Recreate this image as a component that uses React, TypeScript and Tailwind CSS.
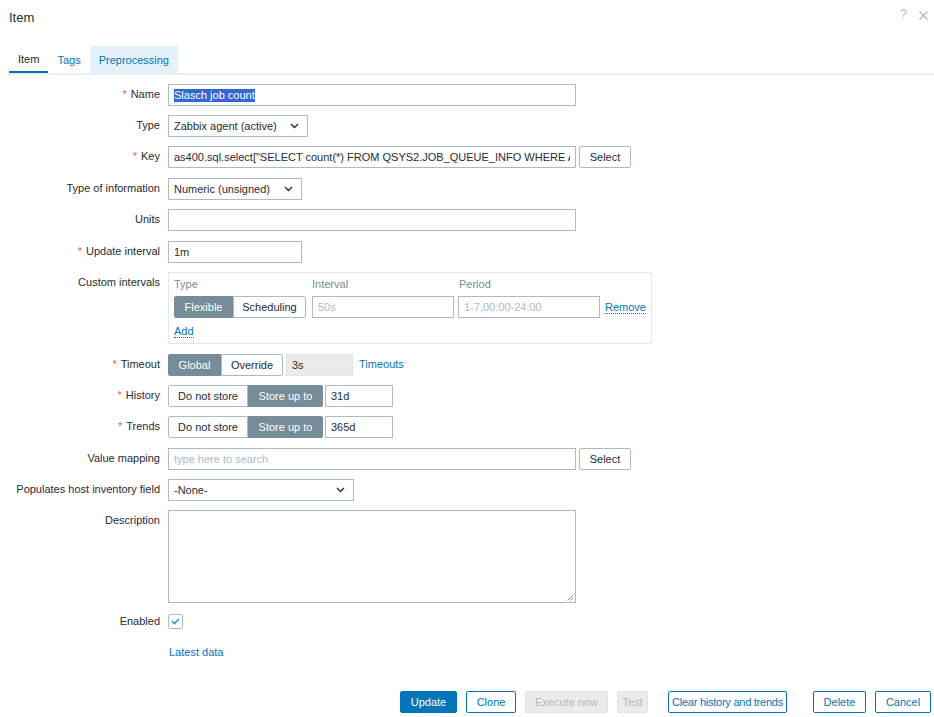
import React from 'react';

const inputCls = 'h-[22px] border border-[#acbbc2] bg-white px-[5px] flex items-center whitespace-nowrap overflow-hidden';

function Label({ text, req, className = '' }: { text: string; req?: boolean; className?: string }) {
  return (
    <div className={`w-[160px] shrink-0 text-right ${className || 'leading-[20px]'}`}>
      {req && <span className="text-[#e45959] mr-[4px]">*</span>}
      {text}
    </div>
  );
}

function Row({ label, req, children, className = '', labelCls = '' }: { label?: string; req?: boolean; children: React.ReactNode; className?: string; labelCls?: string }) {
  return (
    <div className={`flex gap-[8px] ${className}`}>
      <Label text={label ?? ''} req={req} className={labelCls} />
      <div className="flex items-start">{children}</div>
    </div>
  );
}

function Chevron() {
  return (
    <svg width="9" height="6" viewBox="0 0 9 6" className="shrink-0">
      <path d="M1 1 L4.5 4.5 L8 1" fill="none" stroke="#1f2c33" strokeWidth="1.4" />
    </svg>
  );
}

function Select({ value, w }: { value: string; w: string }) {
  return (
    <div className={`${inputCls} ${w} justify-between pr-[8px]`}>
      <span>{value}</span>
      <Chevron />
    </div>
  );
}

function Segmented({ options, active, widths }: { options: string[]; active: number; widths: string[] }) {
  return (
    <div className="flex">
      {options.map((o, i) => (
        <div
          key={o}
          className={`h-[22px] flex items-center justify-center border ${widths[i]} ${
            i === 0 ? 'rounded-l-[2px]' : ''
          } ${i === options.length - 1 ? 'rounded-r-[2px]' : ''} ${
            i === active ? 'bg-[#768d99] border-[#768d99] text-white' : 'bg-white border-[#acbbc2] text-[#1f2c33]'
          }`}
        >
          {o}
        </div>
      ))}
    </div>
  );
}

function GreyButton({ text }: { text: string }) {
  return (
    <div className="ml-[3px] h-[22px] w-[52px] flex items-center justify-center border border-[#acbbc2] rounded-[2px] bg-white">
      {text}
    </div>
  );
}

export default function App() {
  return (
    <div className="relative w-[934px] h-[717px] bg-white text-[11px] text-[#1f2c33] font-['Liberation_Sans',Arial,sans-serif] overflow-hidden">
      {/* header */}
      <div className="flex items-start justify-between pl-[9px] pr-[6px] pt-[10px]">
        <div className="text-[13px] leading-[16px] text-[#1f2c33]">Item</div>
        <div className="flex items-center gap-[12px] text-[#acbbc2]">
          <span className="text-[12px] leading-[12px] -mt-[2px]">?</span>
          <svg width="9" height="9" viewBox="0 0 9 9">
            <path d="M0.5 0.5 L8.5 8.5 M8.5 0.5 L0.5 8.5" stroke="#acbbc2" strokeWidth="1.4" />
          </svg>
        </div>
      </div>

      {/* tabs */}
      <div className="ml-[9px] mt-[20px] flex border-b-2 border-[#ebeef0]">
        <div className="h-[27px] px-[9px] flex items-center border-b-2 border-[#0275b8] pt-px">Item</div>
        <div className="h-[27px] px-[9px] flex items-center text-[#0275b8] pt-px">Tags</div>
        <div className="h-[27px] px-[9px] flex items-center text-[#0275b8] bg-[#e6f2fb] pt-px">Preprocessing</div>
      </div>

      {/* form */}
      <div className="mt-[9px] flex flex-col gap-[9px]">
        <Row label="Name" req>
          <div className={`${inputCls} w-[408px] border-[#0275b8]`}>
            <span className="bg-[#3367d6] text-white leading-[13px]">Slasch job count</span>
          </div>
        </Row>
        <Row label="Type">
          <Select value="Zabbix agent (active)" w="w-[140px]" />
        </Row>
        <Row label="Key" req>
          <input
            readOnly
            value={'as400.sql.select["SELECT count(*) FROM QSYS2.JOB_QUEUE_INFO WHERE ACTIVE_JOBS > 0"]'}
            className="h-[22px] w-[408px] border border-[#acbbc2] bg-white px-[5px] text-[11px] text-[#1f2c33] outline-none"
          />
          <GreyButton text="Select" />
        </Row>
        <Row label="Type of information" className="mt-px">
          <Select value="Numeric (unsigned)" w="w-[134px]" />
        </Row>
        <Row label="Units">
          <div className={`${inputCls} w-[408px]`} />
        </Row>
        <Row label="Update interval" req className="mt-px">
          <div className={`${inputCls} w-[134px]`}>1m</div>
        </Row>
        <Row label="Custom intervals">
          <div className="w-[484px] h-[72px] border border-[#e4e8eb] px-[5px] pt-[4px]">
            <div className="flex text-[#768d99] leading-[14px]">
              <div className="w-[138px]">Type</div>
              <div className="w-[147px]">Interval</div>
              <div>Period</div>
            </div>
            <div className="mt-[5px] flex items-center">
              <Segmented options={['Flexible', 'Scheduling']} active={0} widths={['w-[59px]', 'w-[73px]']} />
              <div className={`${inputCls} w-[143px] ml-[6px] text-[#acbbc2]`}>50s</div>
              <div className={`${inputCls} w-[143px] ml-[4px] text-[#acbbc2]`}>1-7,00:00-24:00</div>
              <span className="ml-[5px] text-[#0275b8] border-b border-dotted border-[#0275b8] leading-[12px]">Remove</span>
            </div>
            <div className="mt-[5px]">
              <span className="text-[#0275b8] border-b border-dotted border-[#0275b8] leading-[12px]">Add</span>
            </div>
          </div>
        </Row>
        <Row label="Timeout" req className="mt-px">
          <Segmented options={['Global', 'Override']} active={0} widths={['w-[53px]', 'w-[62px]']} />
          <div className="ml-[3px] h-[22px] w-[67px] border border-[#dfe4e7] bg-[#ebebeb] px-[5px] flex items-center">3s</div>
          <span className="ml-[6px] text-[#0275b8] leading-[20px]">Timeouts</span>
        </Row>
        <Row label="History" req>
          <Segmented options={['Do not store', 'Store up to']} active={1} widths={['w-[80px]', 'w-[75px]']} />
          <div className={`${inputCls} w-[68px] ml-[2px]`}>31d</div>
        </Row>
        <Row label="Trends" req>
          <Segmented options={['Do not store', 'Store up to']} active={1} widths={['w-[80px]', 'w-[75px]']} />
          <div className={`${inputCls} w-[68px] ml-[2px]`}>365d</div>
        </Row>
        <Row label="Value mapping" className="mt-px">
          <div className={`${inputCls} w-[408px] text-[#acbbc2]`}>type here to search</div>
          <GreyButton text="Select" />
        </Row>
        <Row label="Populates host inventory field">
          <Select value="-None-" w="w-[186px]" />
        </Row>
        <Row label="Description">
          <div className="relative w-[408px] h-[93px] border border-[#acbbc2] bg-white">
            <svg width="7" height="7" viewBox="0 0 7 7" className="absolute right-[1px] bottom-[1px]">
              <path d="M6.5 0.5 L0.5 6.5 M6.5 3.5 L3.5 6.5" stroke="#8a8a8a" strokeWidth="0.9" />
            </svg>
          </div>
        </Row>
        <Row label="Enabled" className="mt-[2px]" labelCls="leading-[15px]">
          <div className="w-[15px] h-[15px] border border-[#acbbc2] rounded-[2px] bg-white flex items-center justify-center">
            <svg width="9" height="7" viewBox="0 0 9 7">
              <path d="M1 3 L3.5 5.5 L8 1" fill="none" stroke="#1a8ad8" strokeWidth="1.3" />
            </svg>
          </div>
        </Row>
        <Row label="" className="mt-[4px]">
          <span className="ml-[1px] text-[#0275b8] leading-[20px]">Latest data</span>
        </Row>
      </div>

      {/* footer buttons */}
      <div className="absolute left-0 right-[3px] top-[691px] flex justify-end">
        <div className="h-[22px] w-[57px] flex items-center justify-center rounded-[2px] bg-[#0275b8] border border-[#0275b8] text-white">Update</div>
        <div className="ml-[9px] h-[22px] w-[50px] flex items-center justify-center rounded-[2px] border border-[#0275b8] text-[#0275b8]">Clone</div>
        <div className="ml-[9px] h-[22px] w-[83px] flex items-center justify-center rounded-[2px] border border-[#dfe4e7] bg-[#ebebeb] text-[#acbbc2]">Execute now</div>
        <div className="ml-[9px] h-[22px] w-[31px] flex items-center justify-center rounded-[2px] border border-[#dfe4e7] bg-[#ebebeb] text-[#acbbc2]">Test</div>
        <div className="ml-[20px] h-[22px] w-[119px] flex items-center justify-center rounded-[2px] border border-[#0275b8] text-[#0275b8] tracking-[-0.25px] whitespace-nowrap">Clear history and trends</div>
        <div className="ml-[26px] h-[22px] w-[53px] flex items-center justify-center rounded-[2px] border border-[#0275b8] text-[#0275b8]">Delete</div>
        <div className="ml-[9px] h-[22px] w-[56px] flex items-center justify-center rounded-[2px] border border-[#0275b8] text-[#0275b8]">Cancel</div>
      </div>
    </div>
  );
}
